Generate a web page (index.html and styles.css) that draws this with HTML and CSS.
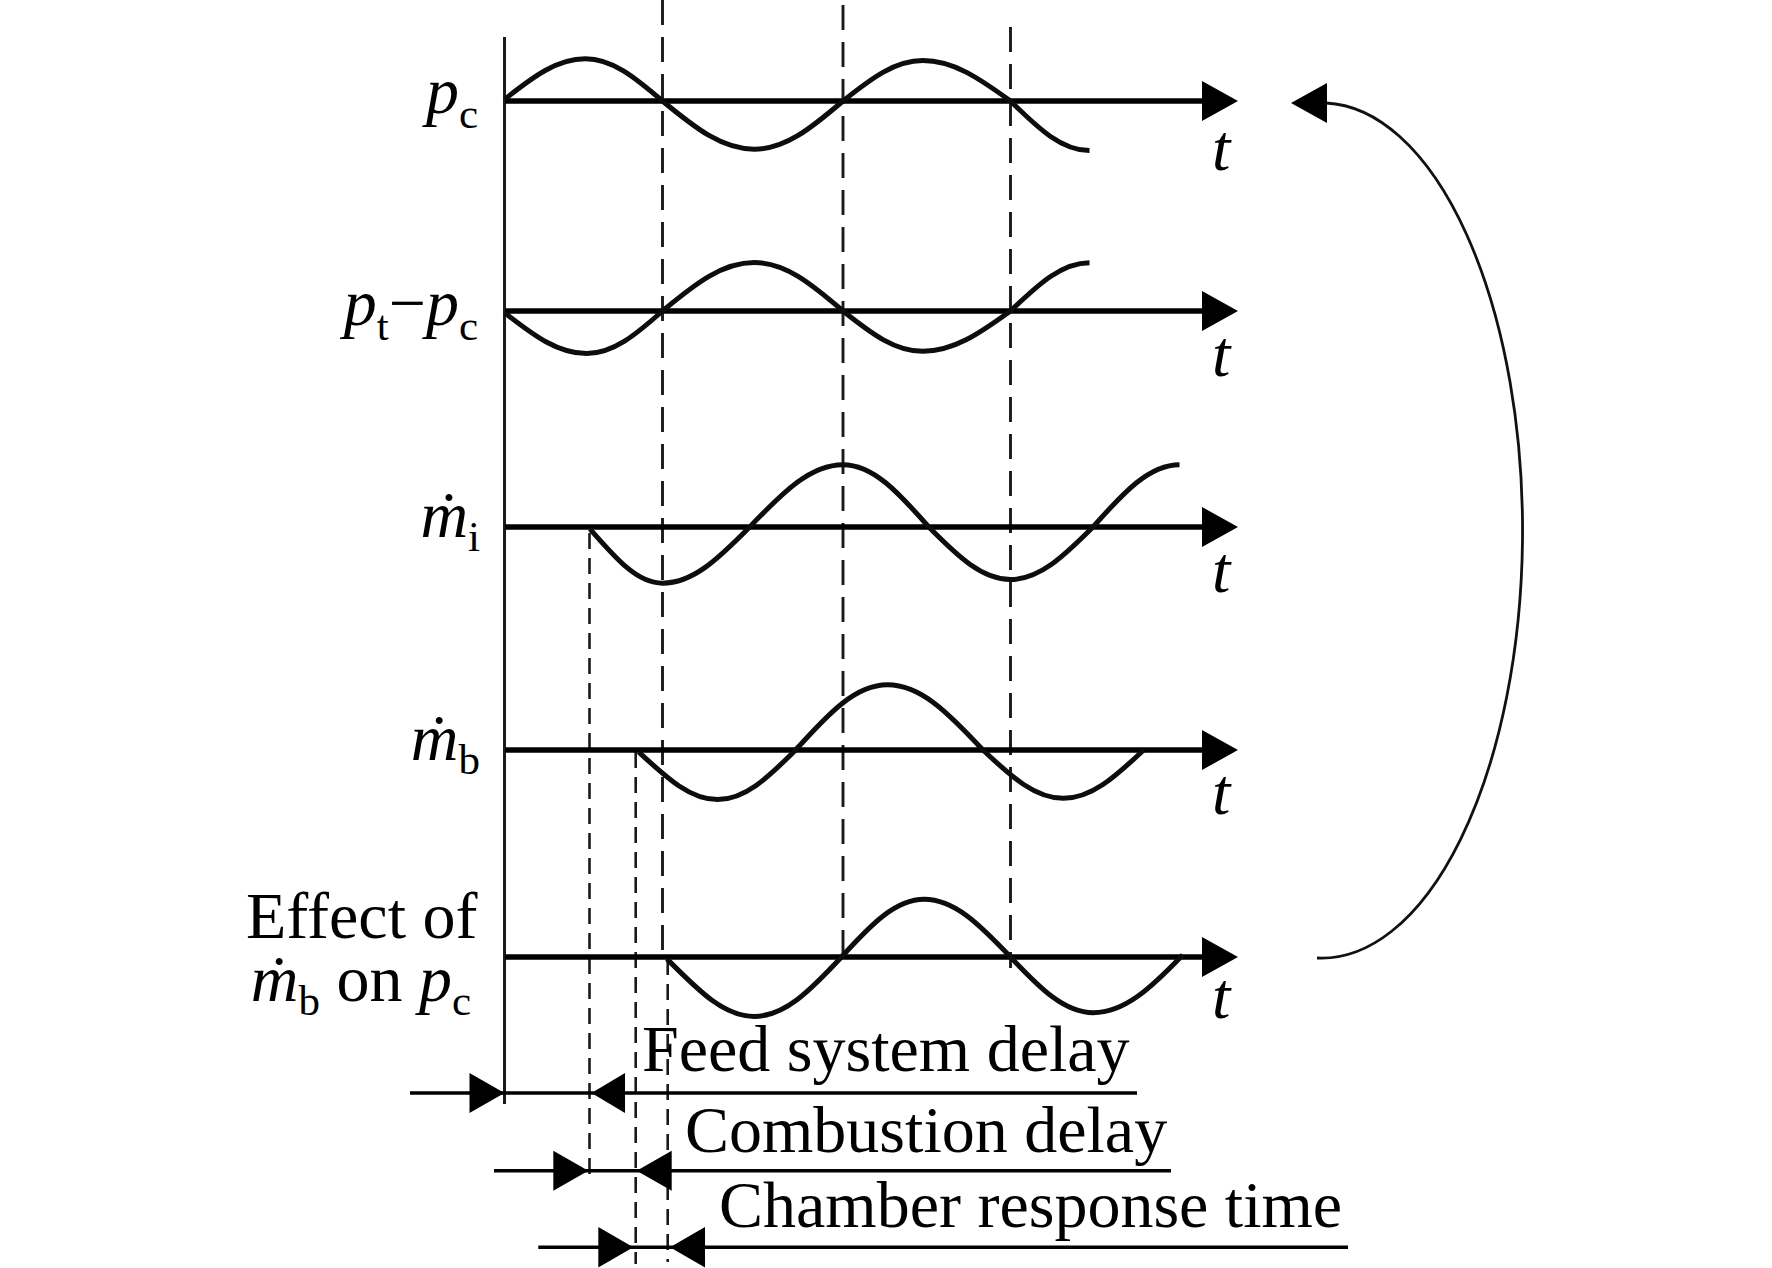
FILE: index.html
```html
<!DOCTYPE html>
<html lang="en">
<head>
<meta charset="utf-8">
<title>Combustion instability feedback loop</title>
<link rel="stylesheet" href="styles.css">
</head>
<body>
<figure class="figure">
<svg class="diagram" width="1772" height="1268" viewBox="0 0 1772 1268" xmlns="http://www.w3.org/2000/svg">
  <!-- vertical time-origin axis -->
  <line class="vaxis" x1="504.5" y1="37" x2="504.5" y2="1104"/>

  <!-- long dashed phase lines -->
  <line class="dash-long" x1="662.5" y1="0" x2="662.5" y2="957"/>
  <line class="dash-long" x1="843" y1="5" x2="843" y2="957"/>
  <line class="dash-long" x1="1010.5" y1="27" x2="1010.5" y2="968"/>

  <!-- fine dashed delay markers -->
  <line class="dash-fine" x1="589.5" y1="533" x2="589.5" y2="1178"/>
  <line class="dash-fine" x1="635.7" y1="752" x2="635.7" y2="1264"/>
  <line class="dash-fine" x1="667.7" y1="959" x2="667.7" y2="1262"/>

  <!-- horizontal time axes -->
  <g class="axes">
    <line class="axis" x1="505" y1="101" x2="1206" y2="101"/>
    <polygon class="head" points="1202,81 1238,101 1202,121"/>
    <line class="axis" x1="505" y1="311" x2="1206" y2="311"/>
    <polygon class="head" points="1202,291 1238,311 1202,331"/>
    <line class="axis" x1="505" y1="527" x2="1206" y2="527"/>
    <polygon class="head" points="1202,507 1238,527 1202,547"/>
    <line class="axis" x1="505" y1="750" x2="1206" y2="750"/>
    <polygon class="head" points="1202,730 1238,750 1202,770"/>
    <line class="axis" x1="505" y1="957" x2="1206" y2="957"/>
    <polygon class="head" points="1202,937 1238,957 1202,977"/>
  </g>

  <!-- waves -->
  <path class="wave" d="M505,99 C534.2,76 557.4,58.8 585.3,58.8 C612.1,58.8 634.4,76.9 662.5,101 C695.9,128.6 722.4,149.2 754.3,149.2 C785.1,149.2 810.7,128.6 843,101 C872,77.9 895.1,60.6 922.8,60.6 C953.2,60.6 978.6,77.9 1010.5,101 C1039.3,129.4 1062.1,150.6 1089.5,150.6"/>
  <path class="wave" d="M505,313 C534.7,336.2 558.4,353.6 586.7,353.6 C613,353.6 634.9,335.4 662.5,311 C695.9,283.3 722.4,262.6 754.3,262.6 C785.1,262.6 810.7,283.3 843,311 C872,334.1 895.1,351.3 922.8,351.3 C953.2,351.3 978.6,334.1 1010.5,311 C1039.3,283.4 1062.1,262.7 1089.5,262.7"/>
  <path class="wave" d="M590,529 C616.4,559.1 637.3,583.2 662.5,583.2 C692.8,583.2 718,559.1 749.7,527 C783.7,491.4 810.6,464.7 843,464.7 C872.8,464.7 897.6,491.4 928.8,527 C958.5,557 982.2,579.5 1010.5,579.5 C1039.1,579.5 1063,557 1093,527 C1124.5,491.4 1149.5,464.7 1179.5,464.7"/>
  <path class="wave" d="M638.6,752 C667.4,778.4 690.2,799.6 717.6,799.6 C744.7,799.6 767.2,778.4 795.6,750 C829.1,712.7 855.6,684.8 887.5,684.8 C920.6,684.8 948.2,712.7 983,750 C1012.2,777.6 1035.4,798.3 1063.3,798.3 C1091.2,798.3 1114.4,777.6 1143.7,750"/>
  <path class="wave" d="M667,959 C698.8,991 724,1016.4 754.3,1016.4 C784.6,1016.4 809.8,991 841.5,957 C871.6,924 895.5,899.3 924.2,899.3 C954.1,899.3 979.1,924 1010.5,957 C1040.6,988.9 1064.5,1012.7 1093.2,1012.7 C1124.3,1012.7 1150.1,988.9 1182.7,955"/>

  <!-- feedback loop -->
  <path class="feedback" d="M1326,103 A 201 427.5 0 0 1 1317,958"/>
  <polygon class="head" points="1327,83 1291,103 1327,123"/>

  <!-- delay spans -->
  <line class="span" x1="410" y1="1093" x2="1137" y2="1093"/>
  <polygon class="head" points="469.5,1073 504.5,1093 469.5,1113"/>
  <polygon class="head" points="625,1073 591.5,1093 625,1113"/>

  <line class="span" x1="494" y1="1170.7" x2="1171" y2="1170.7"/>
  <polygon class="head" points="553.3,1150.7 588.3,1170.7 553.3,1190.7"/>
  <polygon class="head" points="671.7,1150.7 636.7,1170.7 671.7,1190.7"/>

  <line class="span" x1="538.3" y1="1247.3" x2="1348" y2="1247.3"/>
  <polygon class="head" points="598.3,1227 633.3,1247.3 598.3,1267.6"/>
  <polygon class="head" points="705,1227 670,1247.3 705,1267.6"/>

  <!-- row labels -->
  <text class="lbl" x="478" y="112.5" text-anchor="end"><tspan class="it">p</tspan><tspan class="sub" dy="15">c</tspan></text>
  <text class="lbl" x="478" y="325" text-anchor="end"><tspan class="it">p</tspan><tspan class="sub" dy="15">t</tspan><tspan dy="-15">−</tspan><tspan class="it">p</tspan><tspan class="sub" dy="15">c</tspan></text>
  <text class="lbl" x="480" y="536.7" text-anchor="end"><tspan class="it">ṁ</tspan><tspan class="sub" dy="14">i</tspan></text>
  <text class="lbl" x="480" y="760" text-anchor="end"><tspan class="it">ṁ</tspan><tspan class="sub" dy="14">b</tspan></text>
  <text class="lbl" x="246" y="938">Effect of</text>
  <text class="lbl pre" x="471" y="1001" text-anchor="end"><tspan class="it">ṁ</tspan><tspan class="sub" dy="14">b</tspan><tspan dy="-14"> on </tspan><tspan class="it">p</tspan><tspan class="sub" dy="14">c</tspan></text>

  <!-- time labels -->
  <text class="lbl it" x="1212" y="170">t</text>
  <text class="lbl it" x="1212" y="376">t</text>
  <text class="lbl it" x="1212" y="592">t</text>
  <text class="lbl it" x="1212" y="814">t</text>
  <text class="lbl it" x="1212" y="1018">t</text>

  <!-- delay labels -->
  <text class="lbl" x="642" y="1071">Feed system delay</text>
  <text class="lbl" x="685" y="1151.5">Combustion delay</text>
  <text class="lbl" x="719" y="1227">Chamber response time</text>
</svg>
</figure>
</body>
</html>
```

FILE: styles.css
```css
html, body {
  margin: 0;
  padding: 0;
  background: #ffffff;
}

.figure {
  margin: 0;
  width: 1772px;
  height: 1268px;
  overflow: hidden;
}

.diagram {
  display: block;
}

.diagram text {
  font-family: "Liberation Serif", "Times New Roman", serif;
  font-size: 66px;
  fill: #000000;
}

.diagram .it {
  font-style: italic;
}

.diagram .sub {
  font-size: 43px;
  font-style: normal;
}

.diagram .pre {
  white-space: pre;
}

.vaxis {
  stroke: #1a1a1a;
  stroke-width: 3;
}

.axis {
  stroke: #000000;
  stroke-width: 5.5;
}

.head {
  fill: #000000;
}

.wave {
  fill: none;
  stroke: #0d0d0d;
  stroke-width: 5;
}

.dash-long {
  stroke: #1a1a1a;
  stroke-width: 2.9;
  stroke-dasharray: 25 12;
}

.dash-fine {
  stroke: #1a1a1a;
  stroke-width: 2.6;
  stroke-dasharray: 16 9;
}

.span {
  stroke: #000000;
  stroke-width: 3.4;
}

.feedback {
  fill: none;
  stroke: #111111;
  stroke-width: 2.8;
}
```
